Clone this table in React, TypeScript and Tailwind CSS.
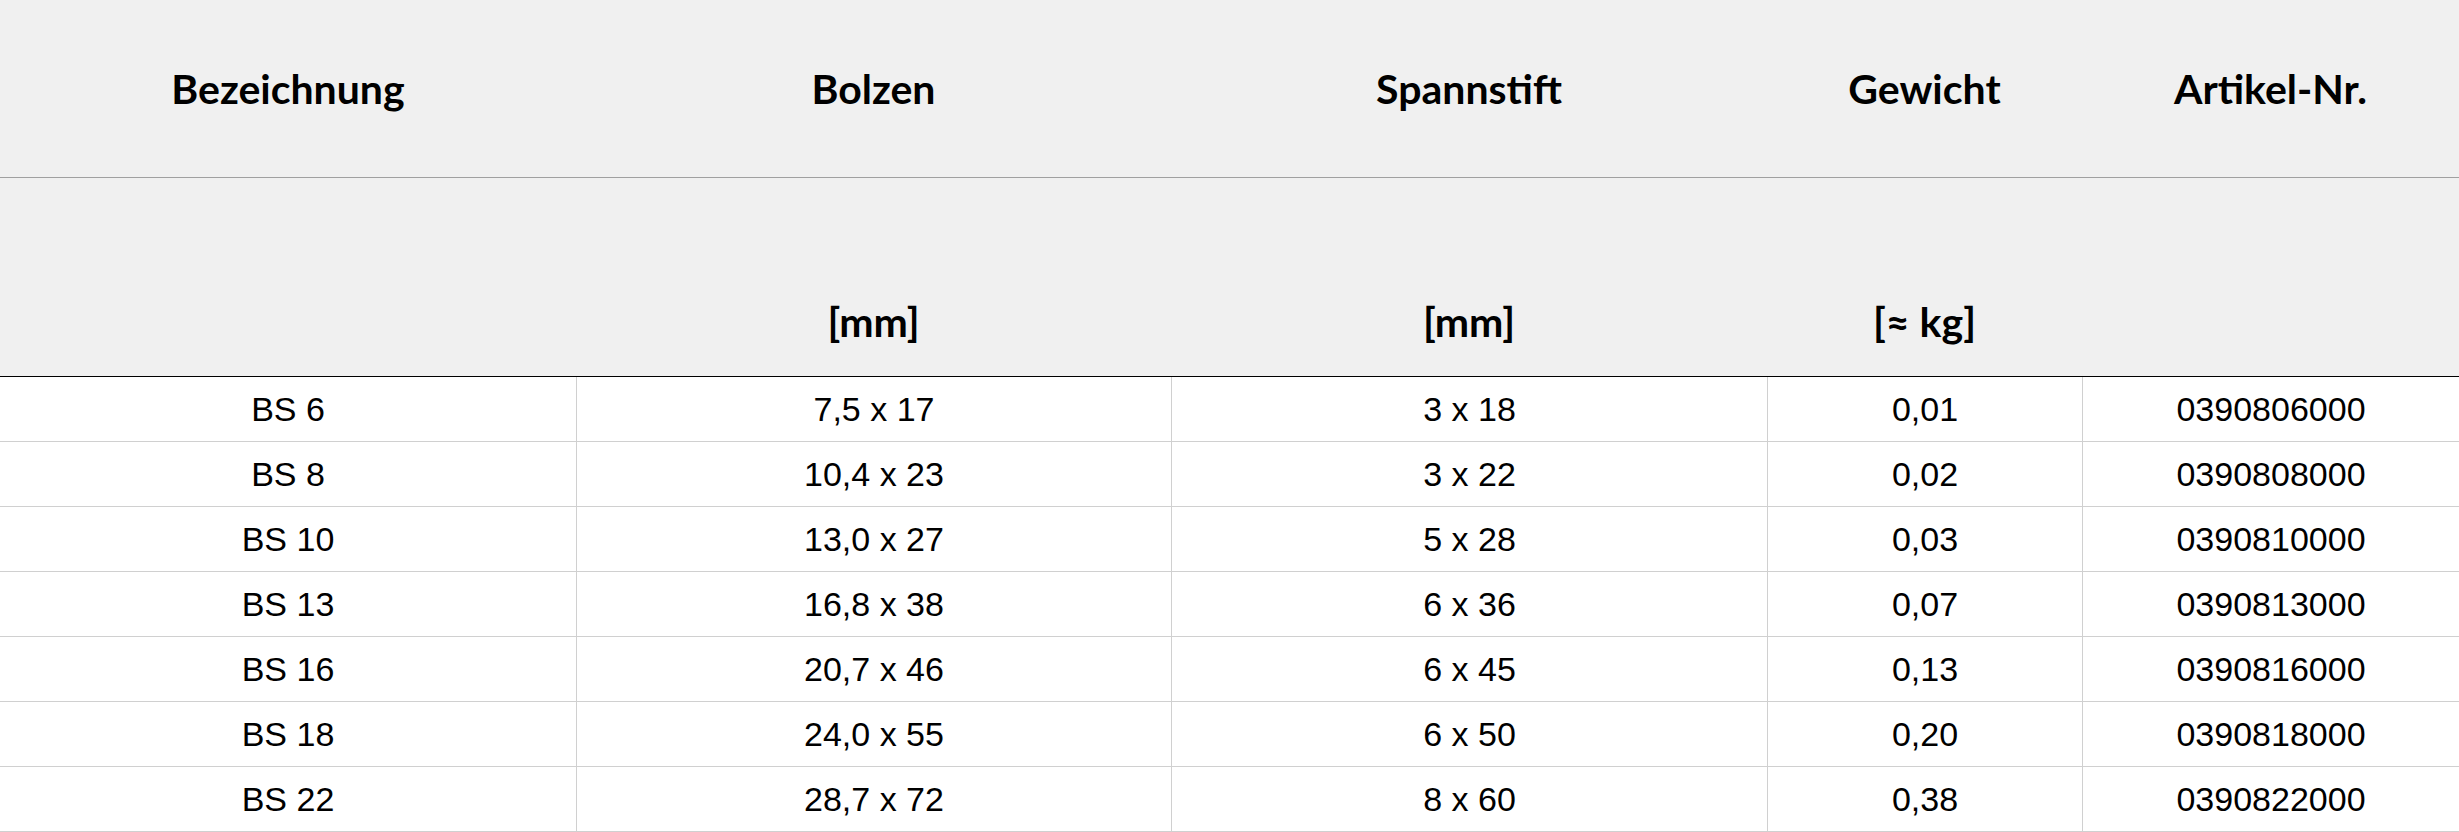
import React from "react";

const rows = [
  ["BS 6", "7,5 x 17", "3 x 18", "0,01", "0390806000"],
  ["BS 8", "10,4 x 23", "3 x 22", "0,02", "0390808000"],
  ["BS 10", "13,0 x 27", "5 x 28", "0,03", "0390810000"],
  ["BS 13", "16,8 x 38", "6 x 36", "0,07", "0390813000"],
  ["BS 16", "20,7 x 46", "6 x 45", "0,13", "0390816000"],
  ["BS 18", "24,0 x 55", "6 x 50", "0,20", "0390818000"],
  ["BS 22", "28,7 x 72", "8 x 60", "0,38", "0390822000"],
];

const head1 = ["Bezeichnung", "Bolzen", "Spannstift", "Gewicht", "Artikel-Nr."];
const head2 = ["", "[mm]", "[mm]", "[≈ kg]", ""];

export default function App() {
  return (
    <div className="w-[2459px] h-[832px] bg-white overflow-hidden">
      <div className="bg-[#f0f0f0] font-['Lato',sans-serif] font-bold text-[41px] text-black">
        <div className="grid grid-cols-[576px_595px_596px_315px_1fr] h-[178px] border-b border-[#a0a0a0]">
          {head1.map((h, i) => (
            <div key={i} className="flex items-center justify-center leading-none">
              {h}
            </div>
          ))}
        </div>
        <div className="grid grid-cols-[576px_595px_596px_315px_1fr] h-[199px] border-b border-black">
          {head2.map((h, i) => (
            <div key={i} className="flex items-end justify-center leading-none pb-[34px]">
              {h}
            </div>
          ))}
        </div>
      </div>
      <div className="font-['Liberation_Sans',Arial,sans-serif] text-[34px] text-black">
        {rows.map((r, ri) => (
          <div
            key={ri}
            className="grid grid-cols-[576px_595px_596px_315px_1fr] h-[65px] border-b border-[#d0d0d0]"
          >
            {r.map((c, ci) => (
              <div
                key={ci}
                className={
                  ci === 0
                    ? "flex items-center justify-center leading-none"
                    : "flex items-center justify-center leading-none border-l border-[#d0d0d0]"
                }
              >
                {c}
              </div>
            ))}
          </div>
        ))}
      </div>
    </div>
  );
}
